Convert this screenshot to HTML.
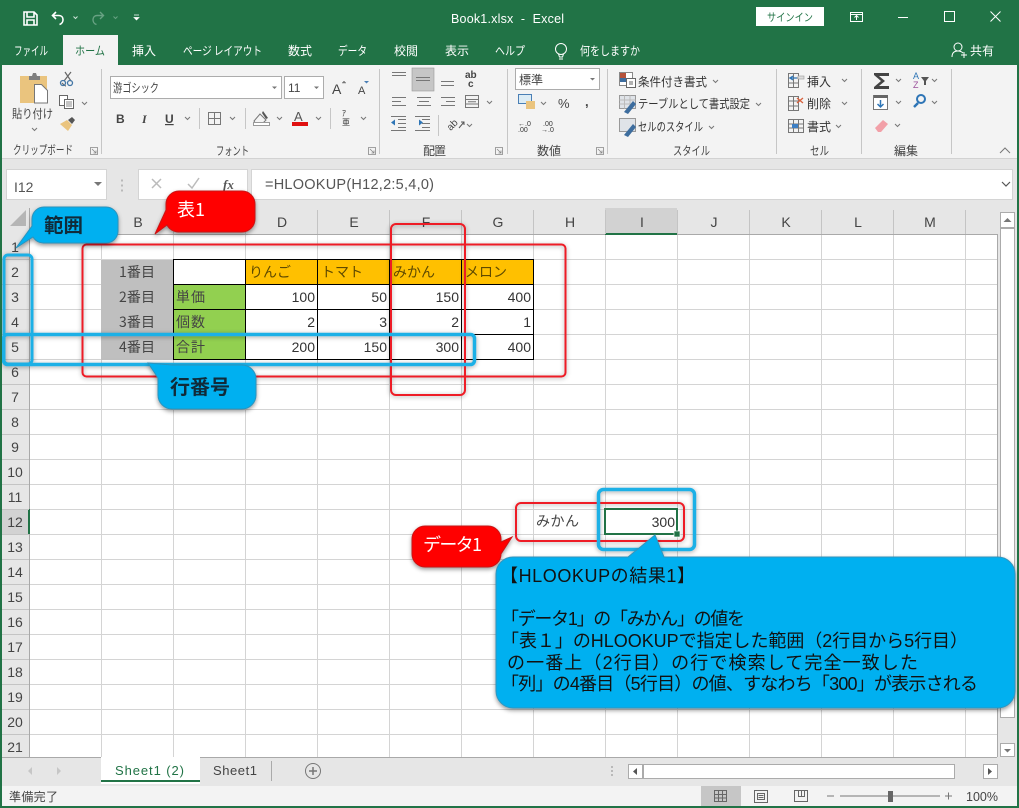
<!DOCTYPE html>
<html lang="ja"><head><meta charset="utf-8"><title>Book1.xlsx - Excel</title>
<style>
html,body{margin:0;padding:0;background:#fff;width:1019px;height:808px;overflow:hidden}
svg{display:block}
text{font-family:"Liberation Sans","Noto Sans CJK JP",sans-serif;fill:#444;font-size:12px}
.j{font-family:"Noto Sans CJK JP","Liberation Sans",sans-serif}
.t{fill:#fff}
.g{font-size:12px;fill:#444}
.cell{font-size:14px;fill:#333}
.jc{font-size:14px;fill:#444;letter-spacing:1px}
.h{font-size:14px;fill:#444;text-anchor:middle}
.big{font-size:18px;fill:#111}
.ic{fill:none;stroke:#666;stroke-width:1}
.chev{fill:none;stroke:#777;stroke-width:1}
</style></head><body>
<svg width="1019" height="808" viewBox="0 0 1019 808" xmlns="http://www.w3.org/2000/svg">
<defs>
<filter id="s" x="-10%" y="-10%" width="120%" height="130%"><feDropShadow dx="0" dy="2" stdDeviation="2" flood-color="#000" flood-opacity=".4"/></filter>
<filter id="s2" x="-10%" y="-10%" width="120%" height="120%"><feDropShadow dx="0" dy="1" stdDeviation="2.5" flood-color="#000" flood-opacity=".35"/></filter>
<pattern id="gridv" x="29" y="0" width="72" height="10" patternUnits="userSpaceOnUse"><rect width="1" height="10" fill="#d4d4d4"/></pattern>
<pattern id="gridh" x="0" y="234" width="10" height="25" patternUnits="userSpaceOnUse"><rect width="10" height="1" fill="#d4d4d4"/></pattern>
</defs>

<!-- window frame + title -->
<rect width="1019" height="808" fill="#e6e6e6"/>
<rect width="1019" height="65" fill="#217346"/>

<!-- qat -->
<g fill="none" stroke="#fff" stroke-width="1.6">
<path d="M24 12h10l3 3v10H24z"/><path d="M27 12v5h7v-5"/><path d="M27 25v-5h7v5" />
<path d="M56 12l-3.500 3.500 3.500 3.500"/><path d="M53 15.500h6c5 0 5.500 7.500 .5 9"/>
</g>
<g fill="none" stroke="#68a283" stroke-width="1.400"><path d="M100 12l3.500 3.500-3.500 3.500"/><path d="M103 15.500h-6c-5 0-5.500 7.500-.5 9"/></g>
<path d="M73.500 16.500l2 2 2-2" fill="none" stroke="#cfe3d8"/><path d="M113.500 16.500l2 2 2-2" fill="none" stroke="#68a283"/>
<path d="M134 15h5M134 17.500h5l-2.500 2.500z" fill="#fff" stroke="#fff" stroke-width=".7"/>
<text x="451" y="23" class="t" style="font-size:12.500px" textLength="113">Book1.xlsx &#160;- &#160;Excel</text>
<rect x="756" y="7" width="68" height="19" fill="#fff"/>
<text x="767" y="21" class="j" style="font-size:11px;fill:#217346" textLength="46" lengthAdjust="spacingAndGlyphs">サインイン</text>
<g fill="none" stroke="#fff" stroke-width="1">
<rect x="850.500" y="12.500" width="12" height="9"/><path d="M850.500 14.500h12M856.500 20v-4M854.500 17.500l2-2 2 2"/>
<path d="M898 17.500h10"/><rect x="944.500" y="11.500" width="10" height="10"/><path d="M990.500 11.500l10 10M1000.500 11.500l-10 10"/>
</g>

<!-- tabs -->
<rect x="63" y="35" width="55" height="30" fill="#f3f3f3"/>
<g class="j">
<text x="14" y="55" class="t j" textLength="34" lengthAdjust="spacingAndGlyphs">ファイル</text>
<text x="75" y="55" class="j" style="fill:#217346" textLength="30" lengthAdjust="spacingAndGlyphs">ホーム</text>
<text x="132" y="55" class="t j" textLength="24">挿入</text>
<text x="183" y="55" class="t j" textLength="79" lengthAdjust="spacingAndGlyphs">ページ レイアウト</text>
<text x="288" y="55" class="t j" textLength="24">数式</text>
<text x="338" y="55" class="t j" textLength="29" lengthAdjust="spacingAndGlyphs">データ</text>
<text x="394" y="55" class="t j" textLength="24">校閲</text>
<text x="445" y="55" class="t j" textLength="24">表示</text>
<text x="495" y="55" class="t j" textLength="30" lengthAdjust="spacingAndGlyphs">ヘルプ</text>
<text x="580" y="55" class="t j" textLength="60" lengthAdjust="spacingAndGlyphs">何をしますか</text>
<text x="970" y="55" class="t j" textLength="24">共有</text>
</g>
<g fill="none" stroke="#fff" stroke-width="1"><circle cx="561" cy="49" r="5.500"/><path d="M558.500 54l1 3h3l1-3M559 59h4"/>
<circle cx="958" cy="47" r="4"/><path d="M952 57c0-5 3-6 6-6s4 1 5 2M961 55h6M964 52v6"/></g>

<!-- ribbon -->
<rect x="2" y="65" width="1017" height="93" fill="#f3f3f3"/>
<rect x="2" y="158" width="1017" height="1" fill="#d2d2d2"/>
<g fill="#c6c6c6">
<rect x="101" y="69" width="1" height="85"/><rect x="379" y="69" width="1" height="85"/><rect x="507" y="69" width="1" height="85"/><rect x="607" y="69" width="1" height="85"/><rect x="776" y="69" width="1" height="85"/><rect x="861" y="69" width="1" height="85"/><rect x="951" y="69" width="1" height="85"/>
<rect x="199" y="108" width="1" height="21"/><rect x="245" y="108" width="1" height="21"/><rect x="330" y="108" width="1" height="21"/><rect x="438" y="115" width="1" height="21"/>
</g>

<!-- clipboard -->
<rect x="20" y="76" width="27" height="27" fill="#eac47e"/>
<path d="M29 76h3l1-3h3l1 3h3v4H29z" fill="#7f7f7f"/>
<path d="M34.500 84.500h7l6 6v12.500h-13z" fill="#fff" stroke="#777"/>
<path d="M62 83c2 2 3 3 4 3m5-14l-7 9m1-9l6 9" fill="none" stroke="#666" stroke-width="1.200"/>
<circle cx="63" cy="83" r="2.500" fill="none" stroke="#4477a6" stroke-width="1.300"/><circle cx="70" cy="83" r="2.500" fill="none" stroke="#4477a6" stroke-width="1.300"/>
<rect x="59.500" y="95.500" width="8" height="10" fill="#fff" stroke="#666"/><rect x="64.500" y="99.500" width="9" height="9" fill="#fff" stroke="#666"/><path d="M66 102h6M66 104h6M66 106h6" stroke="#888"/>
<path d="M60 124l7-4 5 5-4 6z" fill="#eac47e"/><path d="M68 120l4-3 3 3-3 4z" fill="#555"/>
<text x="12" y="118" class="j" textLength="41" lengthAdjust="spacingAndGlyphs">貼り付け</text>
<path class="chev" d="M32 128l2.500 2.500 2.500-2.500M82 102l2.500 2.500 2.500-2.500"/>
<text x="13" y="154" class="j g" textLength="60" lengthAdjust="spacingAndGlyphs">クリップボード</text>
<path d="M90.500 147.500h7v7h-7zM92 149l4 4M96 150.500v2.500h-2.500" fill="none" stroke="#888" stroke-width=".8"/>

<!-- font -->
<rect x="110.500" y="76.500" width="171" height="22" fill="#fff" stroke="#acacac"/>
<text x="113" y="92" class="j" textLength="46" lengthAdjust="spacingAndGlyphs">游ゴシック</text>
<rect x="284.500" y="76.500" width="39" height="22" fill="#fff" stroke="#acacac"/>
<text x="288" y="92" style="font-size:12px">11</text>
<path d="M272 86.500h5l-2.500 2.500zM314 86.500h5l-2.500 2.500z" fill="#777"/>
<text x="332" y="94" style="font-size:14px">A</text><path d="M342 83l2-2 2 2z" fill="#777" stroke="#777" stroke-width=".5"/>
<text x="358" y="94" style="font-size:11px">A</text><path d="M364 81h5l-2.500 2.500z" fill="#4a7fb5"/>
<text x="116" y="123" style="font-size:12px;font-weight:bold">B</text>
<text x="142" y="123" style="font-size:12px;font-style:italic;font-family:'Liberation Serif',serif;font-weight:bold">I</text>
<text x="165" y="123" style="font-size:12px;font-weight:bold;text-decoration:underline">U</text>
<path class="chev" d="M185 117l2.500 2.500 2.500-2.500M230 117l2.500 2.500 2.500-2.500M277 117l2.500 2.500 2.500-2.500M316 117l2.500 2.500 2.500-2.500M361 117l2.500 2.500 2.500-2.500"/>
<rect x="208.500" y="112.500" width="12" height="12" fill="none" stroke="#777"/><path d="M214.500 112.500v12M208.500 118.500h12" stroke="#777"/>
<path d="M254 121l6-7 6 6-4 4h-6z" fill="none" stroke="#777"/><path d="M263 111l5 7-2 1-4-6z" fill="#555"/><rect x="253.500" y="122.500" width="16" height="3" fill="#fff" stroke="#999"/>
<text x="294" y="121" style="font-size:13px;fill:#555">A</text><rect x="292" y="122" width="16" height="4" fill="#e01010"/>
<text x="342" y="116" style="font-size:8px;fill:#333">ｱ</text><text x="342" y="125" class="j" style="font-size:8px;fill:#333">亜</text>
<text x="216" y="155" class="j g" textLength="33" lengthAdjust="spacingAndGlyphs">フォント</text>
<path d="M368.500 147.500h7v7h-7zM370 149l4 4M374 150.500v2.500h-2.500" fill="none" stroke="#888" stroke-width=".8"/>

<!-- align -->
<rect x="412" y="68" width="22" height="23" fill="#c6c6c6" stroke="#999" stroke-width=".6"/>
<g stroke="#777" stroke-width="1" fill="none">
<path d="M392 72.500h14M392 75.500h14M416 77.500h14M416 80.500h14M441 81.500h13M441 85.500h13"/>
<path d="M392 97.500h14M392 101.500h9M392 105.500h14M417 97.500h14M419 101.500h10M417 105.500h14M441 97.500h14M446 101.500h9M441 105.500h14"/>
<rect x="465.500" y="95.500" width="13" height="12"/><path d="M465.500 99.500h13M465.500 104h13M468 101.700h8"/>
<path d="M398 119.500h8M398 123.500h8M398 127.500h8M391 130.500h15M391 116.500h15M422 119.500h8M422 123.500h8M422 127.500h8M415 130.500h15M415 116.500h15"/>
</g>
<path d="M391 122.500l4-3v6zM415 122.500h4v-3l4 3-4 3v-3z" fill="#2e75b6"/>
<text x="465" y="78" style="font-size:10px;font-weight:bold">ab</text><text x="468" y="87" style="font-size:10px;font-weight:bold">c</text>
<text x="446" y="128" transform="rotate(-45 452 124)" style="font-size:10px">ab</text><path d="M459 128l5-6M461 122h3v3" fill="none" stroke="#555"/>
<path class="chev" d="M487 101l2.500 2.500 2.500-2.500M467 124l2.500 2.500 2.500-2.500"/>
<text x="423" y="155" class="j g" textLength="23">配置</text>
<path d="M495.500 147.500h7v7h-7zM497 149l4 4M501 150.500v2.500h-2.500" fill="none" stroke="#888" stroke-width=".8"/>

<!-- number -->
<rect x="515.500" y="68.500" width="84" height="21" fill="#fff" stroke="#acacac"/>
<text x="519" y="84" class="j" textLength="24">標準</text>
<path d="M590 78h5l-2.500 2.500z" fill="#777"/>
<rect x="518.500" y="94.500" width="13" height="9" fill="#dcecf5" stroke="#4a7fb5"/><rect x="526" y="101" width="9" height="8" fill="#eac47e"/>
<text x="558" y="108" style="font-size:13px">%</text><text x="585" y="106" style="font-size:13px;font-weight:bold">,</text>
<path class="chev" d="M541 102l2.500 2.500 2.500-2.500"/>
<text x="518" y="126" style="font-size:7px;fill:#333">←.0</text><text x="518" y="132" style="font-size:7px;fill:#333">.00</text>
<text x="543" y="126" style="font-size:7px;fill:#333">.00</text><text x="541" y="132" style="font-size:7px;fill:#333">→.0</text>
<text x="537" y="155" class="j g" textLength="24">数値</text>
<path d="M596.500 147.500h7v7h-7zM598 149l4 4M602 150.500v2.500h-2.500" fill="none" stroke="#888" stroke-width=".8"/>

<!-- styles -->
<rect x="619.500" y="72.500" width="13" height="13" fill="#fff" stroke="#888"/><rect x="620" y="73" width="6" height="5" fill="#b5523a"/><rect x="620" y="78" width="6" height="4" fill="#3d6d9e"/><rect x="626.500" y="78.500" width="9" height="9" fill="#fff" stroke="#666"/><path d="M629 82h4M629 84h4" stroke="#666"/>
<text x="638" y="86" class="j" style="font-size:12px;fill:#333" textLength="69" lengthAdjust="spacingAndGlyphs">条件付き書式</text>
<g fill="#dfe3e8" stroke="#999"><rect x="619.500" y="95.500" width="16" height="13"/><rect x="619.500" y="118.500" width="16" height="13"/></g>
<path d="M624.500 95.500v13M630 95.500v13M619.500 100h16M619.500 104h16" stroke="#bbb" fill="none"/>
<path d="M624 112l9-11 3 3-8 10zM624 135l9-11 3 3-8 10z" fill="#3d6d9e"/>
<text x="638" y="108" class="j" style="font-size:12px;fill:#333" textLength="112" lengthAdjust="spacingAndGlyphs">テーブルとして書式設定</text>
<text x="638" y="131" class="j" style="font-size:12px;fill:#333" textLength="65" lengthAdjust="spacingAndGlyphs">セルのスタイル</text>
<path class="chev" d="M713 80l2.500 2.500 2.500-2.500M756 103l2.500 2.500 2.500-2.500M709 126l2.500 2.500 2.500-2.500"/>
<text x="673" y="155" class="j g" textLength="37" lengthAdjust="spacingAndGlyphs">スタイル</text>

<!-- cells -->
<g fill="none" stroke="#777"><rect x="788.500" y="73.500" width="10" height="14"/><path d="M788.500 78h10M788.500 83h10M793.500 73.500v14"/><rect x="788.500" y="96.500" width="10" height="14"/><path d="M788.500 101h10M788.500 106h10M793.500 96.500v14"/><rect x="788.500" y="119.500" width="15" height="13"/><path d="M788.500 124h15M788.500 128h15M793.500 119.500v13M798.500 119.500v13"/></g>
<path d="M791 78h6M793 76l-3 2 3 2" fill="none" stroke="#2e75b6" stroke-width="1.300"/><rect x="798" y="76" width="6" height="3" fill="#ddd" stroke="#999" stroke-width=".6"/>
<path d="M797 98l6 5M803 98l-6 5" stroke="#d9603c" stroke-width="1.300"/>
<rect x="792" y="124" width="6" height="4" fill="#3d7fc4"/>
<g class="j" style="font-size:12px"><text x="807" y="86" class="j" style="fill:#333" textLength="24">挿入</text><text x="807" y="108" class="j" style="fill:#333" textLength="24">削除</text><text x="807" y="131" class="j" style="fill:#333" textLength="24">書式</text></g>
<path class="chev" d="M842 79l2.500 2.500 2.500-2.500M842 102l2.500 2.500 2.500-2.500M836 125l2.500 2.500 2.500-2.500"/>
<text x="810" y="155" class="j g" textLength="19" lengthAdjust="spacingAndGlyphs">セル</text>

<!-- edit -->
<path d="M874 73h15v3h-10l6 5-6 5h10v3h-15v-2l7-6-7-6z" fill="#444"/>
<rect x="873.500" y="95.500" width="14" height="14" fill="#fff" stroke="#777"/><rect x="874" y="95" width="14" height="3" fill="#666"/><path d="M880.500 100v7M877.500 104l3 3 3-3" fill="none" stroke="#2e75b6" stroke-width="1.500"/>
<path d="M875 128l8-8 5 4-7 8h-3z" fill="#f2a0a8"/>
<text x="913" y="79" style="font-size:9px;fill:#2e75b6">A</text><text x="913" y="88" style="font-size:9px;fill:#9a4f9a">Z</text><path d="M921 77h8l-3 4v4h-2v-4z" fill="#555"/>
<circle cx="921" cy="99" r="4" fill="none" stroke="#2e75b6" stroke-width="2"/><path d="M918 103l-4 4" stroke="#2e75b6" stroke-width="2.500"/>
<path class="chev" d="M896 79l2.500 2.500 2.500-2.500M932 79l2.500 2.500 2.500-2.500M896 101l2.500 2.500 2.500-2.500M932 101l2.500 2.500 2.500-2.500M895 124l2.500 2.500 2.500-2.500"/>
<text x="894" y="155" class="j g" textLength="24">編集</text>
<path d="M1000 153l5-5 5 5" fill="none" stroke="#777"/>

<!-- formula bar -->
<rect x="2" y="159" width="1017" height="49" fill="#e6e6e6"/>
<rect x="6.500" y="169.500" width="100" height="30" fill="#fff" stroke="#d4d4d4"/>
<text x="14" y="192" style="font-size:14px;fill:#555">I12</text>
<path d="M94 182h8l-4 4z" fill="#777"/>
<path d="M122 179.500v2M122 184.500v2M122 189.500v2" stroke="#aaa" stroke-width="1.500"/>
<rect x="138.500" y="169.500" width="109" height="30" fill="#fff" stroke="#d4d4d4"/>
<path d="M152 179l9 9M161 179l-9 9" stroke="#bbb" stroke-width="1.500" fill="none"/>
<path d="M188 184l4 4 7-10" stroke="#bbb" stroke-width="1.500" fill="none"/>
<text x="223" y="189" style="font-family:'Liberation Serif',serif;font-style:italic;font-weight:bold;font-size:13px;fill:#555">fx</text>
<rect x="251.500" y="169.500" width="761" height="30" fill="#fff" stroke="#d4d4d4"/>
<text x="265" y="189" style="font-size:14.500px;fill:#555" textLength="169">=HLOOKUP(H12,2:5,4,0)</text>
<path d="M1002 182l4 4 4-4" fill="none" stroke="#555" stroke-width="1.200"/>

<!-- sheet -->
<rect x="30" y="235" width="967" height="522" fill="#fff"/>
<rect x="30" y="235" width="967" height="522" fill="url(#gridv)"/>
<rect x="30" y="235" width="967" height="522" fill="url(#gridh)"/>
<rect x="0" y="208" width="997" height="26" fill="#e6e6e6"/>
<rect x="0" y="234" width="997" height="1" fill="#a9a9a9"/>
<rect x="0" y="208" width="30" height="549" fill="#e6e6e6"/>
<rect x="29" y="208" width="1" height="549" fill="#a9a9a9"/>
<rect x="605" y="208" width="72" height="26" fill="#d2d2d2"/><rect x="605" y="233" width="72" height="2" fill="#217346"/>
<rect x="0" y="509" width="30" height="25" fill="#d2d2d2"/><rect x="28" y="509" width="2" height="25" fill="#217346"/>
<path d="M10 226h16v-16z" fill="#b5b5b5"/>
<g fill="#c4c4c4"><rect x="101" y="210" width="1" height="24"/><rect x="173" y="210" width="1" height="24"/><rect x="245" y="210" width="1" height="24"/><rect x="317" y="210" width="1" height="24"/><rect x="389" y="210" width="1" height="24"/><rect x="461" y="210" width="1" height="24"/><rect x="533" y="210" width="1" height="24"/><rect x="605" y="210" width="1" height="24"/><rect x="677" y="210" width="1" height="24"/><rect x="749" y="210" width="1" height="24"/><rect x="821" y="210" width="1" height="24"/><rect x="893" y="210" width="1" height="24"/><rect x="965" y="210" width="1" height="24"/></g>
<g fill="#c4c4c4"><rect x="0" y="259" width="29" height="1"/><rect x="0" y="284" width="29" height="1"/><rect x="0" y="309" width="29" height="1"/><rect x="0" y="334" width="29" height="1"/><rect x="0" y="359" width="29" height="1"/><rect x="0" y="384" width="29" height="1"/><rect x="0" y="409" width="29" height="1"/><rect x="0" y="434" width="29" height="1"/><rect x="0" y="459" width="29" height="1"/><rect x="0" y="484" width="29" height="1"/><rect x="0" y="509" width="29" height="1"/><rect x="0" y="534" width="29" height="1"/><rect x="0" y="559" width="29" height="1"/><rect x="0" y="584" width="29" height="1"/><rect x="0" y="609" width="29" height="1"/><rect x="0" y="634" width="29" height="1"/><rect x="0" y="659" width="29" height="1"/><rect x="0" y="684" width="29" height="1"/><rect x="0" y="709" width="29" height="1"/><rect x="0" y="734" width="29" height="1"/></g>
<g class="h">
<text class="h" x="138" y="227">B</text><text class="h" x="282" y="227">D</text><text class="h" x="354" y="227">E</text><text class="h" x="426" y="227">F</text><text class="h" x="498" y="227">G</text><text class="h" x="570" y="227">H</text><text class="h" x="642" y="227">I</text><text class="h" x="714" y="227">J</text><text class="h" x="786" y="227">K</text><text class="h" x="858" y="227">L</text><text class="h" x="930" y="227">M</text>
<text class="h" x="15" y="252">1</text><text class="h" x="15" y="277">2</text><text class="h" x="15" y="302">3</text><text class="h" x="15" y="327">4</text><text class="h" x="15" y="352">5</text><text class="h" x="15" y="377">6</text><text class="h" x="15" y="402">7</text><text class="h" x="15" y="427">8</text><text class="h" x="15" y="452">9</text><text class="h" x="15" y="477">10</text><text class="h" x="15" y="502">11</text><text class="h" x="15" y="527">12</text><text class="h" x="15" y="552">13</text><text class="h" x="15" y="577">14</text><text class="h" x="15" y="602">15</text><text class="h" x="15" y="627">16</text><text class="h" x="15" y="652">17</text><text class="h" x="15" y="677">18</text><text class="h" x="15" y="702">19</text><text class="h" x="15" y="727">20</text><text class="h" x="15" y="752">21</text>
</g>

<!-- table -->
<rect x="101" y="260" width="72" height="100" fill="#bfbfbf"/>
<rect x="173" y="284" width="72" height="75" fill="#92d050"/>
<rect x="173" y="260" width="72" height="24" fill="#fff"/>
<rect x="245" y="260" width="288" height="24" fill="#ffc000"/>
<rect x="245" y="285" width="288" height="74" fill="#fff"/>
<g fill="#000"><rect x="173" y="259" width="361" height="1"/><rect x="173" y="284" width="361" height="1"/><rect x="173" y="309" width="361" height="1"/><rect x="173" y="334" width="361" height="1"/><rect x="173" y="359" width="361" height="1"/><rect x="173" y="259" width="1" height="101"/><rect x="245" y="259" width="1" height="101"/><rect x="317" y="259" width="1" height="101"/><rect x="389" y="259" width="1" height="101"/><rect x="461" y="259" width="1" height="101"/><rect x="533" y="259" width="1" height="101"/></g>
<text x="119" y="277" class="j jc" textLength="37">1番目</text><text x="119" y="302" class="j jc" textLength="37">2番目</text><text x="119" y="327" class="j jc" textLength="37">3番目</text><text x="119" y="352" class="j jc" textLength="37">4番目</text>
<text x="176" y="302" class="j jc" textLength="30">単価</text><text x="176" y="327" class="j jc" textLength="30">個数</text><text x="176" y="352" class="j jc" textLength="30">合計</text>
<text x="249" y="277" class="j jc" style="fill:#5f4a00" textLength="43">りんご</text><text x="321" y="277" class="j jc" style="fill:#5f4a00" textLength="43">トマト</text><text x="393" y="277" class="j jc" style="fill:#5f4a00" textLength="43">みかん</text><text x="465" y="277" class="j jc" style="fill:#5f4a00" textLength="43">メロン</text>
<g style="text-anchor:end">
<text class="cell" text-anchor="end" x="315" y="302">100</text><text class="cell" text-anchor="end" x="387" y="302">50</text><text class="cell" text-anchor="end" x="459" y="302">150</text><text class="cell" text-anchor="end" x="531" y="302">400</text>
<text class="cell" text-anchor="end" x="315" y="327">2</text><text class="cell" text-anchor="end" x="387" y="327">3</text><text class="cell" text-anchor="end" x="459" y="327">2</text><text class="cell" text-anchor="end" x="531" y="327">1</text>
<text class="cell" text-anchor="end" x="315" y="352">200</text><text class="cell" text-anchor="end" x="387" y="352">150</text><text class="cell" text-anchor="end" x="459" y="352">300</text><text class="cell" text-anchor="end" x="531" y="352">400</text>
</g>
<text x="536" y="526" class="j jc" textLength="44">みかん</text>
<text class="cell" text-anchor="end" x="675" y="527">300</text>
<rect x="605" y="509" width="72" height="25" fill="none" stroke="#217346" stroke-width="2"/>
<rect x="674" y="531" width="6" height="6" fill="#217346" stroke="#fff" stroke-width=".7"/>

<!-- v scrollbar -->
<rect x="998" y="208" width="21" height="549" fill="#e6e6e6"/>
<rect x="997" y="234" width="1" height="524" fill="#a9a9a9"/>
<rect x="1000.500" y="212.500" width="14" height="15" fill="#fff" stroke="#ababab"/>
<path d="M1003.500 222h8l-4-4z" fill="#777"/>
<rect x="1000.500" y="228.500" width="14" height="489" fill="#fff" stroke="#ababab"/>
<rect x="1000.500" y="743.500" width="14" height="13" fill="#fff" stroke="#ababab"/>
<path d="M1004 749h7l-3.500 3.500z" fill="#777"/>

<!-- annotation frames -->
<g fill="none" filter="url(#s2)">
<rect x="82.500" y="244.500" width="483" height="132" rx="4" stroke="#ee1c25" stroke-width="2"/>
<rect x="391" y="224" width="74" height="171" rx="5" stroke="#ee1c25" stroke-width="2"/>
<rect x="516" y="503" width="168" height="38" rx="5" stroke="#ee1c25" stroke-width="2"/>
<rect x="3.500" y="334.500" width="471" height="30" rx="4" stroke="#1fb0e6" stroke-width="3.500"/>
<rect x="4" y="255" width="28" height="109" rx="4" stroke="#1fb0e6" stroke-width="3"/>
<rect x="598.500" y="489.500" width="96" height="60" rx="5" stroke="#1fb0e6" stroke-width="3.500"/>
</g>

<!-- callouts -->
<path d="M44 207h62a12 12 0 0 1 12 12v12a12 12 0 0 1-12 12H44a12 12 0 0 1-11-6L16 248l16-22v-7a12 12 0 0 1 12-12z" fill="#00b0f0" stroke="#2b93bd" stroke-width="1" filter="url(#s)"/>
<text x="44" y="232" class="j" style="font-size:19.500px;font-weight:700;fill:#102b3a">範囲</text>
<path d="M179 191h63a13 13 0 0 1 13 13v15a13 13 0 0 1-13 13h-63a13 13 0 0 1-12-7l-12 9 11-24v-6a13 13 0 0 1 13-13z" fill="#ff0000" stroke="#c81414" stroke-width="1" filter="url(#s)"/>
<text x="177" y="216" class="j t" style="font-size:18px">表1</text>
<path d="M172 365h70a14 14 0 0 1 14 14v16a14 14 0 0 1-14 14h-70a14 14 0 0 1-14-14v-17l-10-15z" fill="#00b0f0" stroke="#2b93bd" stroke-width="1" filter="url(#s)"/>
<text x="170" y="394" class="j" style="font-size:20px;font-weight:700;fill:#102b3a">行番号</text>
<path d="M425 526h63a13 13 0 0 1 13 13v3l11-5-11 17v0a13 13 0 0 1-13 13h-63a13 13 0 0 1-13-13v-15a13 13 0 0 1 13-13z" fill="#ff0000" stroke="#c81414" stroke-width="1" filter="url(#s)"/>
<text x="423" y="551" class="j t" style="font-size:18px" textLength="59">データ1</text>
<path d="M516 557h112l27-22 9 22h334a17 17 0 0 1 17 17v117a17 17 0 0 1-17 17H513a17 17 0 0 1-17-17V574a17 17 0 0 1 17-17z" fill="#00b0f0" stroke="#3395bd" stroke-width="1" filter="url(#s)"/>
<g class="big">
<text x="500" y="582" class="big" textLength="195">【HLOOKUPの結果1】</text>
<text x="501" y="625" class="big" textLength="244">「データ1」の「みかん」の値を</text>
<text x="501" y="647" class="big" textLength="467">「表１」のHLOOKUPで指定した範囲（2行目から5行目）</text>
<text x="507" y="669" class="big" textLength="411">の一番上（2行目）の行で検索して完全一致した</text>
<text x="501" y="690" class="big" textLength="477">「列」の4番目（5行目）の値、すなわち「300」が表示される</text>
</g>

<!-- tab bar -->
<rect x="0" y="757" width="1019" height="29" fill="#e6e6e6"/>
<rect x="0" y="757" width="997" height="1" fill="#a9a9a9"/>
<rect x="101" y="757" width="99" height="27" fill="#fff"/>
<rect x="101" y="780" width="99" height="2" fill="#217346"/>
<text x="115" y="775" style="font-size:13px;fill:#217346" textLength="69">Sheet1 (2)</text>
<text x="213" y="775" style="font-size:13px" textLength="44">Sheet1</text>
<rect x="271" y="761" width="1" height="20" fill="#aaa"/>
<circle cx="313" cy="771" r="7.500" fill="none" stroke="#777"/><path d="M309 771h8M313 767v8" stroke="#777" stroke-width="1.500"/>
<path d="M32 767l-4 4 4 4zM57 767l4 4-4 4z" fill="#c6c6c6"/>
<path d="M612 766v2M612 770v2M612 774v2" stroke="#aaa" stroke-width="1.500"/>
<rect x="628.500" y="764.500" width="14" height="14" fill="#fff" stroke="#ababab"/><path d="M637 768v7l-4-3.500z" fill="#555"/>
<rect x="643.500" y="764.500" width="311" height="14" fill="#fff" stroke="#ababab"/>
<rect x="983.500" y="764.500" width="14" height="14" fill="#fff" stroke="#ababab"/><path d="M988 768v7l4-3.500z" fill="#555"/>

<!-- status -->
<rect x="0" y="786" width="1019" height="20" fill="#f3f3f3"/>
<text x="9" y="801" class="j" style="font-size:12px" textLength="49">準備完了</text>
<rect x="701" y="786" width="40" height="20" fill="#c6c6c6"/>
<g fill="none" stroke="#666" stroke-width="1">
<rect x="714.500" y="790.500" width="12" height="11"/><path d="M718.500 790.500v11M722.500 790.500v11M714.500 794.500h12M714.500 798h12"/>
<rect x="754.500" y="790.500" width="13" height="12"/><path d="M757.500 793.500h7v6h-7zM758.500 795.500h5M758.500 797.500h5"/>
<rect x="794.500" y="790.500" width="13" height="11"/><path d="M798.500 790.500v6h6v-6M801.500 790.500v6"/>
</g>
<path d="M827 796h7M840 796h100M945 796h7M948.500 792.500v7" stroke="#777" fill="none"/>
<rect x="888" y="791" width="5" height="11" fill="#666"/>
<text x="966" y="801" style="font-size:12.500px">100%</text>

<!-- window edge -->
<rect x="0" y="65" width="2" height="743" fill="#217346"/>
<rect x="0" y="806" width="1019" height="2" fill="#217346"/>
<rect x="1017" y="65" width="2" height="743" fill="#217346"/>
</svg>
</body></html>
